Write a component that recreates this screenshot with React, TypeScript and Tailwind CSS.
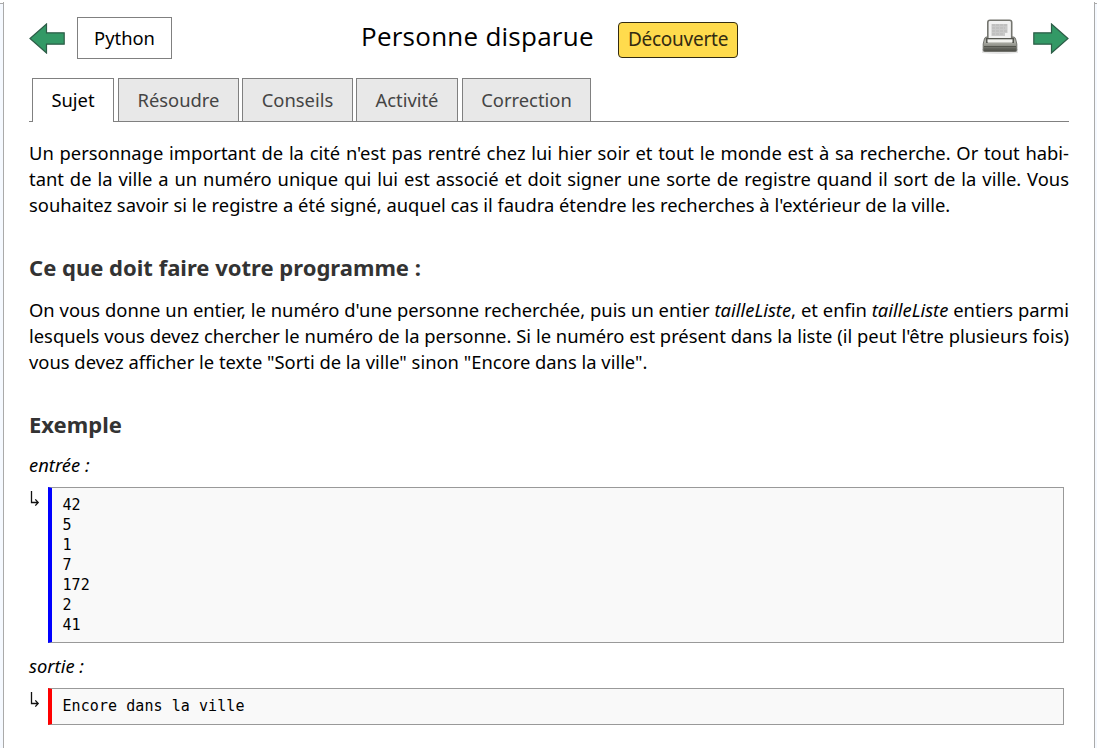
import React from "react";

const tabs = [
  { label: "Résoudre", box: "ml-1 w-[121px]" },
  { label: "Conseils", box: "ml-[3px] w-[111px]" },
  { label: "Activité", box: "ml-[3px] w-[102px]" },
  { label: "Correction", box: "ml-1 w-[129px]" },
];

function Arrow({ className }: { className: string }) {
  return (
    <svg viewBox="0 0 36 31" className={className} aria-hidden="true">
      <path d="M.8 9.8H18.5V1L35 15.5 18.5 30V21.2H.8Z" fill="#339966" stroke="#2d5c47" strokeWidth="1.2" />
    </svg>
  );
}

function Printer() {
  return (
    <svg viewBox="0 0 36 35" className="mr-[15px] h-[35px] w-9" aria-hidden="true">
      <defs>
        <linearGradient id="body" x1="0" y1="0" x2="0" y2="1">
          <stop offset="0" stopColor="#8d8e87" />
          <stop offset=".3" stopColor="#b4b5ae" />
          <stop offset=".68" stopColor="#85867e" />
          <stop offset=".74" stopColor="#666760" />
          <stop offset="1" stopColor="#4c4d47" />
        </linearGradient>
      </defs>
      <path d="M0 30H36V34Q18 36 0 34Z" fill="#e4e4e4" />
      <path d="M4.5 18H31.5Q33 18 33.6 20L34.8 25V31Q34.8 32.5 33.3 32.5H2.7Q1.2 32.5 1.2 31V25L2.4 20Q3 18 4.5 18Z" fill="url(#body)" stroke="#70716b" />
      <path d="M8 1.3H27.5Q29.7 1.3 29.7 3.5V20H5.8V3.5Q5.8 1.3 8 1.3Z" fill="#f1f1f1" stroke="#74756f" strokeWidth="1.6" />
      <path d="M9.5 5H25.5V14H23V17H9.5Z" fill="#c9c9c9" />
      <path d="M10 6H25M10 9H23M10 12H25M10 15H21" stroke="#b7b7b7" strokeDasharray="3 1" />
      <path d="M4 19H32V24H30V22H6V24H4Z" fill="#555650" />
      <path d="M5.5 20.3H30.5V23.4H5.5Z" fill="#f3f3f0" />
      <path d="M2 27.5H34" stroke="#54554e" />
    </svg>
  );
}

function CodeBlock({ className, children }: { className: string; children: string }) {
  return (
    <div className="flex">
      <svg viewBox="0 0 19 22" className="h-[22px] w-[19px] shrink-0" fill="none" stroke="#111" strokeWidth="1.3" aria-hidden="true">
        <path d="M2.5 4V15.5H9M6.3 12.4L9.2 15.5 6.3 18.6" />
      </svg>
      <pre className={`w-[1016px] border border-l-4 border-[#999] bg-[#f9f9f9] pl-[10.5px] font-['DejaVu_Sans_Mono',monospace] text-[15px] leading-5 tracking-[0.07px] text-black ${className}`}>
        {children}
      </pre>
    </div>
  );
}

export default function App() {
  return (
    <div className="flex h-[748px] w-[1097px] overflow-hidden bg-white font-['Noto_Sans',sans-serif] text-[18.36px] text-black">
      <div className="mt-[3px] w-[3px] shrink-0 border-t border-[#aaa] bg-[#f5f9ff]" />
      <main className="mt-[2px] w-[1092px] shrink-0 border-x border-[#aaa] bg-white pt-px pl-[25px]">
        <header className="flex h-[75px]">
          <Arrow className="mt-5 h-[31px] w-9 -scale-x-100" />
          <button className="mt-[14px] ml-3 h-[42px] w-[95px] border border-[#808080] leading-10">Python</button>
          <h1 className="mt-[14px] ml-[189px] w-[257px] whitespace-nowrap font-['Open_Sans',sans-serif] text-[26px] leading-[38px] tracking-[0.25px]">Personne disparue</h1>
          <span className="mt-[19px] flex h-9 w-[120px] items-center justify-center rounded-[4px] border border-[#332b11] bg-[#ffdb4d] pb-[2px] text-[19px] tracking-[-0.25px] text-[#332b11]">Découverte</span>
          <div className="mt-4 ml-[244px] flex">
            <Printer />
            <Arrow className="mt-1 h-[31px] w-9" />
          </div>
        </header>
        <nav className="flex h-11 w-[1040px] text-center leading-[42px]">
          <div className="w-[3px] border-b border-[#808080]" />
          <div className="w-[82px] border border-b-0 border-[#808080]">Sujet</div>
          {tabs.map((t) => (
            <div key={t.label} className="border-b border-[#808080]">
              <div className={`h-[43px] border border-b-0 border-[#808080] bg-[#e8e8e8] text-[#444] ${t.box}`}>{t.label}</div>
            </div>
          ))}
          <div className="grow border-b border-[#808080]" />
        </nav>
        <section className="w-[1040px] leading-[26px]">
          <div className="mt-[18px] whitespace-nowrap">
            <p className="[text-align-last:justify]">Un personnage important de la cité n'est pas rentré chez lui hier soir et tout le monde est à sa recherche. Or tout habi-</p>
            <p className="[text-align-last:justify]">tant de la ville a un numéro unique qui lui est associé et doit signer une sorte de registre quand il sort de la ville. Vous</p>
            <p>souhaitez savoir si le registre a été signé, auquel cas il faudra étendre les recherches à l'extérieur de la ville.</p>
          </div>
          <h2 className="mt-[34px] text-[22.03px] font-bold leading-[30px] text-[#333]">Ce que doit faire votre programme :</h2>
          <div className="mt-[15px] whitespace-nowrap">
            <p className="[text-align-last:justify]">On vous donne un entier, le numéro d'une personne recherchée, puis un entier <i>tailleListe</i>, et enfin <i>tailleListe</i> entiers parmi</p>
            <p className="[text-align-last:justify]">lesquels vous devez chercher le numéro de la personne. Si le numéro est présent dans la liste (il peut l'être plusieurs fois)</p>
            <p>vous devez afficher le texte "Sorti de la ville" sinon "Encore dans la ville".</p>
          </div>
          <h2 className="mt-[34px] text-[22.03px] font-bold leading-[30px] text-[#333]">Exemple</h2>
          <p className="mt-[13px] mb-[9px] italic">entrée :</p>
          <CodeBlock className="h-[156px] border-l-[#00f] pt-[7px]">{"42\n5\n1\n7\n172\n2\n41"}</CodeBlock>
          <p className="mt-[10px] mb-[9px] italic">sortie :</p>
          <CodeBlock className="h-[37px] border-l-[#f00] pt-[7px]">Encore dans la ville</CodeBlock>
        </section>
      </main>
      <div className="mt-[3px] grow border-t border-[#aaa] bg-[#f5f9ff]" />
    </div>
  );
}
